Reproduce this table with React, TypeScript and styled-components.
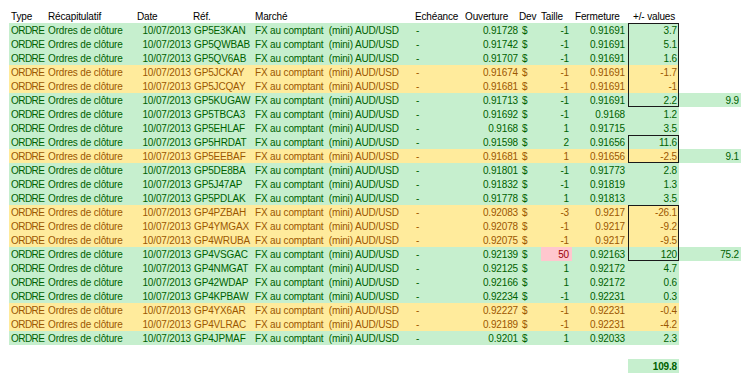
import React from "react";
import styled, { createGlobalStyle, css } from "styled-components";

const GlobalStyle = createGlobalStyle`
  html, body {
    margin: 0;
    padding: 0;
    background: #ffffff;
  }
  body {
    font-family: "Liberation Sans", Arial, sans-serif;
    font-size: 10px;
    letter-spacing: -0.15px;
    color: #000000;
  }
`;

const COLUMNS = "37px 89px 57px 60px 161px 50px 56px 22px 31px 56px 51px 62px";

type Tone = "good" | "neutral" | "bad" | "none";

const fills: Record<Tone, string> = {
  good: "#c6efce",
  neutral: "#ffeb9c",
  bad: "#ffc7ce",
  none: "transparent",
};

const inks: Record<Tone, string> = {
  good: "#006100",
  neutral: "#9c5700",
  bad: "#9c0006",
  none: "#000000",
};

const Page = styled.div`
  padding: 9px 0 0 9px;
`;

const Sheet = styled.div`
  display: flex;
  flex-direction: column;
`;

const Row = styled.div`
  display: grid;
  grid-template-columns: ${COLUMNS};
  height: 14px;
`;

const Cell = styled.div<{
  $tone?: Tone;
  $right?: boolean;
  $pl?: number;
  $pr?: number;
  $box?: { top?: boolean; bottom?: boolean };
  $bold?: boolean;
  $col?: number;
  $tight?: boolean;
}>`
  box-sizing: border-box;
  height: 14px;
  line-height: 15px;
  white-space: nowrap;
  overflow: visible;
  background: ${(p) => fills[p.$tone ?? "none"]};
  color: ${(p) => inks[p.$tone ?? "none"]};
  text-align: ${(p) => (p.$right ? "right" : "left")};
  padding-left: ${(p) => p.$pl ?? 2}px;
  padding-right: ${(p) => p.$pr ?? 2}px;
  font-weight: ${(p) => (p.$bold ? 700 : 400)};
  ${(p) => p.$tight && css`letter-spacing: -0.55px;`}
  ${(p) => p.$col && css`grid-column: ${p.$col};`}
  ${(p) => {
    if (!p.$box) return "";
    const shadows = ["inset 1px 0 0 #1a1a1a", "inset -1px 0 0 #1a1a1a"];
    if (p.$box.top) shadows.push("inset 0 1px 0 #1a1a1a");
    if (p.$box.bottom) shadows.push("inset 0 -1px 0 #1a1a1a");
    return css`box-shadow: ${shadows.join(", ")};`;
  }}
`;

const Spacer = styled.div`
  height: 14px;
`;

type Order = {
  ref: string;
  tone: "good" | "neutral";
  open: string;
  size: string;
  close: string;
  diff: string;
  extra?: string;
  pinkSize?: boolean;
  box?: { top?: boolean; bottom?: boolean };
};

const orders: Order[] = [
  { ref: "GP5E3KAN", tone: "good", open: "0.91728", size: "-1", close: "0.91691", diff: "3.7", box: { top: true } },
  { ref: "GP5QWBAB", tone: "good", open: "0.91742", size: "-1", close: "0.91691", diff: "5.1", box: {} },
  { ref: "GP5QV6AB", tone: "good", open: "0.91707", size: "-1", close: "0.91691", diff: "1.6", box: {} },
  { ref: "GP5JCKAY", tone: "neutral", open: "0.91674", size: "-1", close: "0.91691", diff: "-1.7", box: {} },
  { ref: "GP5JCQAY", tone: "neutral", open: "0.91681", size: "-1", close: "0.91691", diff: "-1", box: {} },
  { ref: "GP5KUGAW", tone: "good", open: "0.91713", size: "-1", close: "0.91691", diff: "2.2", extra: "9.9", box: { bottom: true } },
  { ref: "GP5TBCA3", tone: "good", open: "0.91692", size: "-1", close: "0.9168", diff: "1.2" },
  { ref: "GP5EHLAF", tone: "good", open: "0.9168", size: "1", close: "0.91715", diff: "3.5" },
  { ref: "GP5HRDAT", tone: "good", open: "0.91598", size: "2", close: "0.91656", diff: "11.6", box: { top: true } },
  { ref: "GP5EEBAF", tone: "neutral", open: "0.91681", size: "1", close: "0.91656", diff: "-2.5", extra: "9.1", box: { bottom: true } },
  { ref: "GP5DE8BA", tone: "good", open: "0.91801", size: "-1", close: "0.91773", diff: "2.8" },
  { ref: "GP5J47AP", tone: "good", open: "0.91832", size: "-1", close: "0.91819", diff: "1.3" },
  { ref: "GP5PDLAK", tone: "good", open: "0.91778", size: "1", close: "0.91813", diff: "3.5" },
  { ref: "GP4PZBAH", tone: "neutral", open: "0.92083", size: "-3", close: "0.9217", diff: "-26.1", box: { top: true } },
  { ref: "GP4YMGAX", tone: "neutral", open: "0.92078", size: "-1", close: "0.9217", diff: "-9.2", box: {} },
  { ref: "GP4WRUBA", tone: "neutral", open: "0.92075", size: "-1", close: "0.9217", diff: "-9.5", box: {} },
  { ref: "GP4VSGAC", tone: "good", open: "0.92139", size: "50", close: "0.92163", diff: "120", extra: "75.2", pinkSize: true, box: { bottom: true } },
  { ref: "GP4NMGAT", tone: "good", open: "0.92125", size: "1", close: "0.92172", diff: "4.7" },
  { ref: "GP42WDAP", tone: "good", open: "0.92166", size: "1", close: "0.92172", diff: "0.6" },
  { ref: "GP4KPBAW", tone: "good", open: "0.92234", size: "-1", close: "0.92231", diff: "0.3" },
  { ref: "GP4YX6AR", tone: "neutral", open: "0.92227", size: "-1", close: "0.92231", diff: "-0.4" },
  { ref: "GP4VLRAC", tone: "neutral", open: "0.92189", size: "-1", close: "0.92231", diff: "-4.2" },
  { ref: "GP4JPMAF", tone: "good", open: "0.9201", size: "1", close: "0.92033", diff: "2.3" },
];

export default function App() {
  return (
    <>
      <GlobalStyle />
      <Page>
        <Sheet>
          <Row>
            <Cell>Type</Cell>
            <Cell>Récapitulatif</Cell>
            <Cell>Date</Cell>
            <Cell $pl={1}>Réf.</Cell>
            <Cell $pl={3}>Marché</Cell>
            <Cell>Echéance</Cell>
            <Cell>Ouverture</Cell>
            <Cell $pl={0}>Dev</Cell>
            <Cell $pl={0}>Taille</Cell>
            <Cell $pl={3}>Fermeture</Cell>
            <Cell $pl={5}>+/- values</Cell>
          </Row>
          {orders.map((o) => (
            <Row key={o.ref}>
              <Cell $tone={o.tone} $tight>ORDRE</Cell>
              <Cell $tone={o.tone}>Ordres de clôture</Cell>
              <Cell $tone={o.tone} $right $pr={1}>10/07/2013</Cell>
              <Cell $tone={o.tone}>{o.ref}</Cell>
              <Cell $tone={o.tone} $pl={3}>
                FX au comptant{"\u00a0"} (mini) AUD/USD
              </Cell>
              <Cell $tone={o.tone} $pl={3}>-</Cell>
              <Cell $tone={o.tone} $right $pr={1}>{o.open}</Cell>
              <Cell $tone={o.tone} $pl={3}>$</Cell>
              <Cell $tone={o.pinkSize ? "bad" : o.tone} $right $pr={3}>{o.size}</Cell>
              <Cell $tone={o.tone} $right $pr={3}>{o.close}</Cell>
              <Cell $tone={o.tone} $right $pr={2} $box={o.box}>{o.diff}</Cell>
              {o.extra && (
                <Cell $tone="good" $right $pr={2}>{o.extra}</Cell>
              )}
            </Row>
          ))}
          <Spacer />
          <Row>
            <Cell $col={11} $tone="good" $right $pr={2} $bold>109.8</Cell>
          </Row>
        </Sheet>
      </Page>
    </>
  );
}
